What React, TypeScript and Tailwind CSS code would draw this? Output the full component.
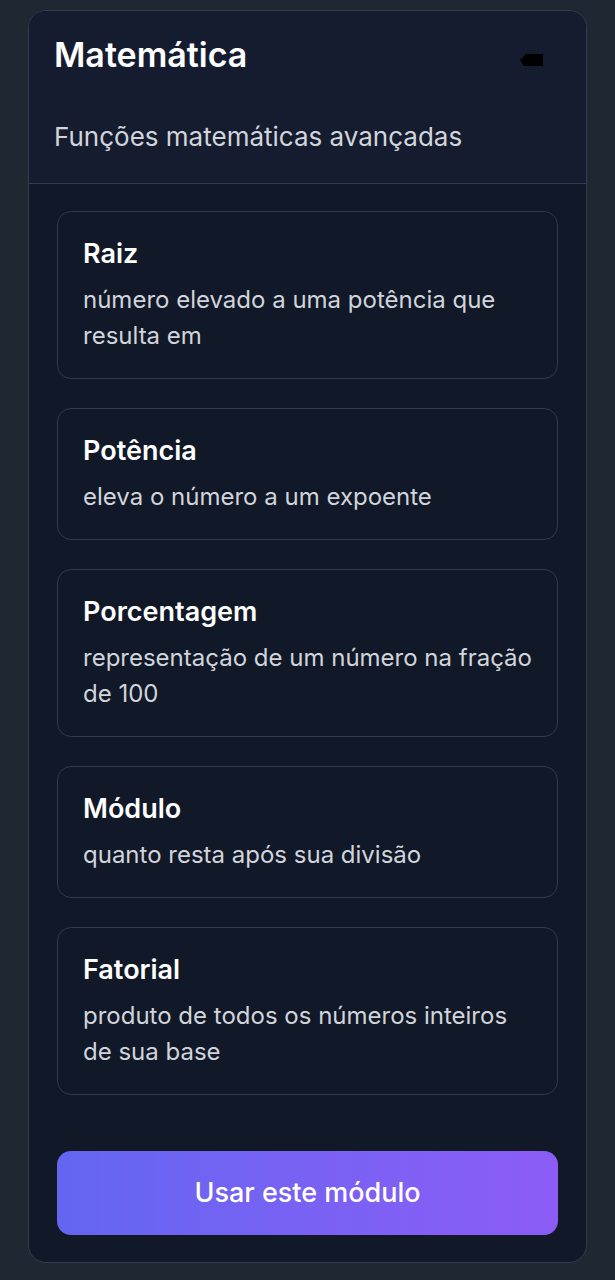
const ITEMS = [
  { title: 'Raiz', desc: 'número elevado a uma potência que resulta em' },
  { title: 'Potência', desc: 'eleva o número a um expoente' },
  { title: 'Porcentagem', desc: 'representação de um número na fração de 100' },
  { title: 'Módulo', desc: 'quanto resta após sua divisão' },
  { title: 'Fatorial', desc: 'produto de todos os números inteiros de sua base' },
];

function FunctionCard({ title, desc }: { title: string; desc: string }) {
  return (
    <div className="rounded-[14px] border border-[#323a4b] bg-[#111827] px-[25px] pt-[21px] pb-[24px]">
      <h3 className="text-[27px] leading-[42px] font-semibold text-white">{title}</h3>
      <p className="mt-[7px] text-[24px] leading-[36px] text-[#d1d5db]">{desc}</p>
    </div>
  );
}

export default function App() {
  return (
    <div className="min-h-[1280px] bg-[#1f2733] px-[28px] pt-[10px] pb-[16px] font-['Inter',sans-serif]">
      <div className="overflow-hidden rounded-[18px] border border-[#343c4d] bg-[#111827]">
        {/* Header */}
        <div className="border-b border-[#343c4d] bg-[#161c2f] px-[25px] pt-[20px] pb-[28px]">
          <div className="flex items-center justify-between">
            <h2 className="text-[34px] leading-[48px] font-semibold text-white">Matemática</h2>
            <svg width="24" height="14" viewBox="0 0 24 14" className="mr-[17px] mt-[10px]">
              <polygon points="0,7 6,1 23,1 23,13 4,13" fill="#000" />
            </svg>
          </div>
          <p className="mt-[40px] text-[26px] leading-[36px] text-[#d1d5db]">Funções matemáticas avançadas</p>
        </div>

        {/* Body */}
        <div className="px-[28px] pt-[27px] pb-[27px]">
          <div className="flex flex-col gap-[29px]">
            {ITEMS.map((it) => (
              <FunctionCard key={it.title} title={it.title} desc={it.desc} />
            ))}
          </div>
          <button className="mt-[56px] h-[84px] w-full rounded-[14px] bg-gradient-to-r from-[#6366f1] to-[#8b5cf6] text-[27px] font-medium text-white">
            Usar este módulo
          </button>
        </div>
      </div>
    </div>
  );
}
